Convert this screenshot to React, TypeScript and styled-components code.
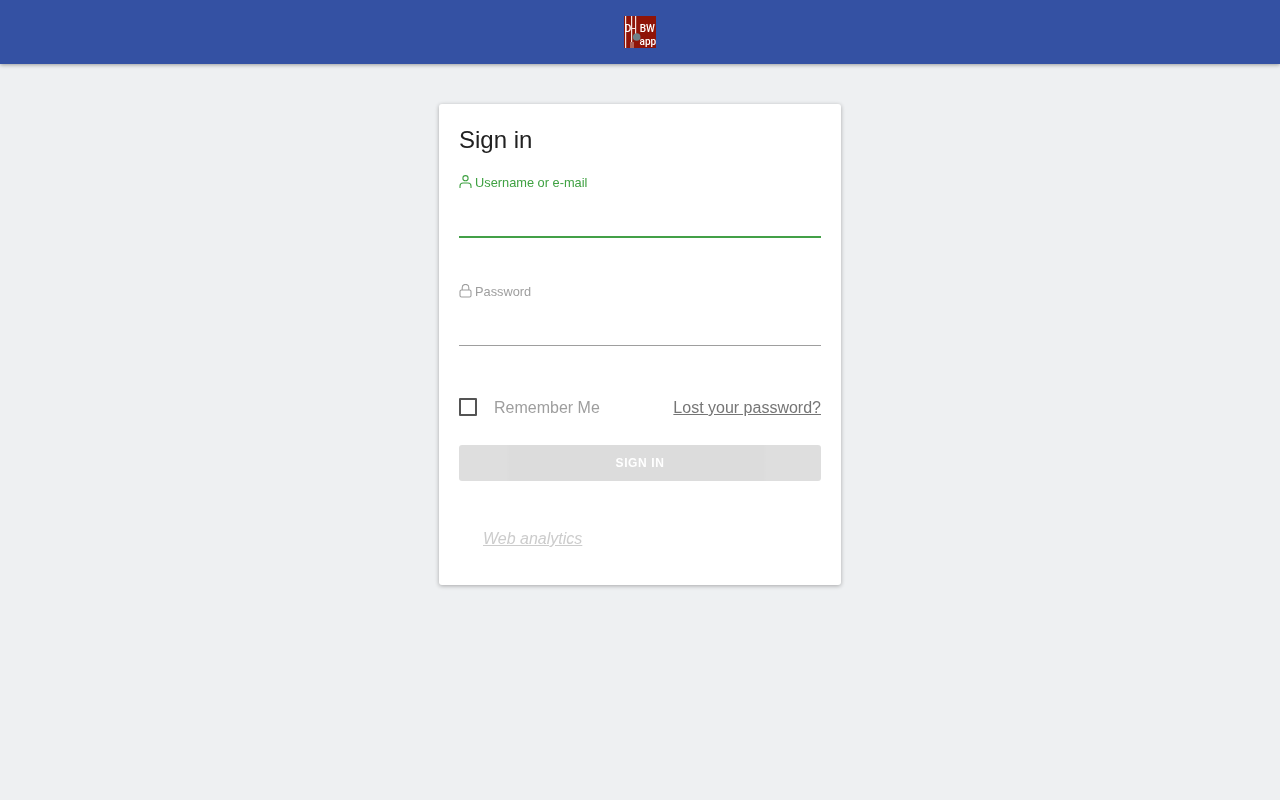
import React from "react";
import styled, { createGlobalStyle } from "styled-components";

const GlobalStyle = createGlobalStyle`
  html, body {
    margin: 0;
    padding: 0;
    height: 100%;
    background: #eef0f2;
    font-family: "Liberation Sans", Arial, sans-serif;
  }
`;

const Page = styled.div`
  min-height: 800px;
  display: flex;
  flex-direction: column;
  align-items: center;
  will-change: transform;
`;

const Header = styled.header`
  width: 100%;
  height: 64px;
  background: #3451a3;
  display: flex;
  align-items: center;
  justify-content: center;
  box-shadow: 0 1px 4px rgba(0, 0, 0, 0.35);
`;

const Card = styled.main`
  box-sizing: border-box;
  width: 402px;
  height: 481px;
  margin-top: 40px;
  padding: 20px;
  background: #ffffff;
  border-radius: 3px;
  box-shadow: 0 1px 4px rgba(0, 0, 0, 0.3);
`;

const Title = styled.h1`
  margin: 0;
  font-size: 24px;
  line-height: 32px;
  font-weight: 400;
  color: #212121;
`;

const Field = styled.div<{ $active?: boolean }>`
  height: 62px;
  margin-top: ${({ $active }) => ($active ? "18px" : "45px")};
  display: flex;
  flex-direction: column;
  color: ${({ $active }) => ($active ? "#3fa142" : "#9e9e9e")};
  border-bottom: ${({ $active }) =>
    $active ? "2px solid #43a047" : "1px solid #9e9e9e"};
`;

const Label = styled.label`
  display: flex;
  align-items: center;
  gap: 3px;
  height: 18px;
  font-size: 12.8px;
  line-height: 18px;
  white-space: nowrap;
`;

const LabelIcon = styled.svg`
  width: 13px;
  height: 14px;
  margin-top: -2px;
  fill: none;
  stroke: currentColor;
  stroke-width: 1.1;
`;

const TextInput = styled.input`
  flex: 1;
  border: 0;
  outline: 0;
  background: transparent;
  font: inherit;
`;

const OptionsRow = styled.div`
  display: flex;
  align-items: center;
  justify-content: space-between;
  margin-top: 51px;
  height: 20px;
`;

const Remember = styled.label`
  display: flex;
  align-items: center;
  gap: 17px;
  font-size: 16px;
  color: #9e9e9e;
`;

const RememberText = styled.span`
  margin-top: 2px;
`;

const CheckBox = styled.span`
  box-sizing: border-box;
  width: 18px;
  height: 18px;
  border: 2px solid #545454;
  border-radius: 1px;
`;

const LostLink = styled.a`
  margin-top: 2px;
  font-size: 16px;
  color: #757575;
  text-decoration: underline;
`;

const SubmitButton = styled.button`
  display: block;
  width: 100%;
  height: 36px;
  margin-top: 28px;
  padding: 0;
  border: 0;
  border-radius: 3px;
  background: linear-gradient(
    90deg,
    #dedede 0,
    #dedede 13%,
    #dcdcdc 14%,
    #dcdcdc 84%,
    #dedede 85%
  );
  color: #ffffff;
  font-family: "Liberation Sans", Arial, sans-serif;
  font-size: 12px;
  font-weight: 700;
  letter-spacing: 0.6px;
`;

const Analytics = styled.a`
  display: inline-block;
  margin: 49px 0 0 24px;
  font-size: 16px;
  font-style: italic;
  color: #cccccc;
  text-decoration: underline;
`;

const LogoMark = () => (
  <svg width="32" height="32" viewBox="0 0 32 32">
    <rect x="0" y="0" width="32" height="32" fill="#8f1408" />
    <rect x="1" y="0" width="1.2" height="32" fill="#f4e4e0" />
    <rect x="7" y="0" width="1.2" height="32" fill="#f4e4e0" />
    <rect x="11" y="0" width="1.2" height="20" fill="#f4e4e0" />
    <rect x="7" y="12" width="5" height="1" fill="#f4e4e0" />
    <rect x="6" y="26" width="4" height="6" fill="#b0635a" />
    <circle cx="12.7" cy="21" r="3.8" fill="#6f8088" />
    <text x="0.5" y="16" fontFamily="Roboto, sans-serif" fontSize="10.5" fontWeight="500" fill="#ffffff">D</text>
    <text x="15.8" y="16" fontFamily="Roboto, sans-serif" fontSize="10" fontWeight="500" fill="#ffffff">BW</text>
    <text x="15.5" y="29" fontFamily="Roboto, sans-serif" fontSize="10" fontWeight="500" fill="#ffffff">app</text>
  </svg>
);

const UserIcon = () => (
  <LabelIcon viewBox="0 0 13 14">
    <circle cx="6.5" cy="3.2" r="2.6" />
    <path d="M1 13v-2c0-1.8 1.4-3 3-3h5c1.6 0 3 1.2 3 3v2" />
  </LabelIcon>
);

const LockIcon = () => (
  <LabelIcon viewBox="0 0 13 14">
    <rect x="1" y="6" width="11" height="7" rx="1.5" />
    <path d="M3.2 6V3.7a3.3 3.3 0 0 1 6.6 0V6" />
  </LabelIcon>
);

export default function App() {
  return (
    <Page>
      <GlobalStyle />
      <Header>
        <LogoMark />
      </Header>
      <Card>
        <Title>Sign in</Title>
        <Field $active>
          <Label>
            <UserIcon />
            Username or e-mail
          </Label>
          <TextInput />
        </Field>
        <Field>
          <Label>
            <LockIcon />
            Password
          </Label>
          <TextInput type="password" />
        </Field>
        <OptionsRow>
          <Remember>
            <CheckBox />
            <RememberText>Remember Me</RememberText>
          </Remember>
          <LostLink href="#">Lost your password?</LostLink>
        </OptionsRow>
        <SubmitButton>SIGN IN</SubmitButton>
        <Analytics href="#">Web analytics</Analytics>
      </Card>
    </Page>
  );
}
